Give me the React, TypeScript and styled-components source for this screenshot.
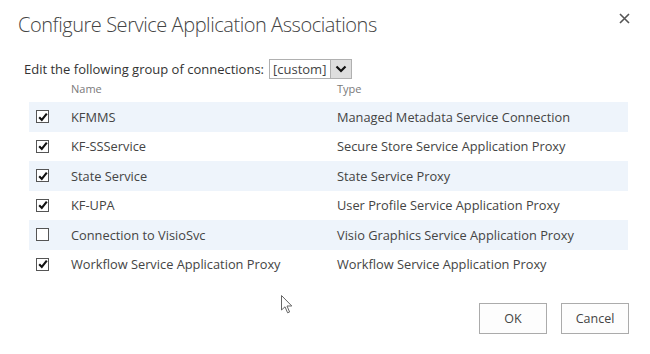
import React from "react";
import styled, { createGlobalStyle } from "styled-components";

const GlobalStyle = createGlobalStyle`
  html, body {
    margin: 0;
    padding: 0;
    background: #ffffff;
  }
  body {
    font-family: "Open Sans", "Liberation Sans", sans-serif;
    color: #444444;
  }
`;

const Dialog = styled.div`
  position: relative;
  width: 650px;
  height: 354px;
  box-sizing: border-box;
  padding: 10px 13px 0 18px;
  display: flex;
  flex-direction: column;
  overflow: hidden;
`;

const Header = styled.div`
  display: flex;
  align-items: flex-start;
  justify-content: space-between;
`;

const Title = styled.h1`
  margin: 0;
  font-weight: 300;
  font-size: 20px;
  line-height: 30px;
  color: #444444;
  letter-spacing: -0.45px;
`;

const CloseButton = styled.button`
  border: none;
  background: transparent;
  padding: 0;
  margin: 1px 6px 0 0;
  width: 14px;
  height: 14px;
  display: flex;
  align-items: center;
  justify-content: center;
  cursor: pointer;
`;

const GroupLine = styled.div`
  display: flex;
  align-items: center;
  gap: 5px;
  margin: 19px 0 0 6px;
  font-size: 13px;
  color: #333333;
`;

const Select = styled.div`
  display: flex;
  align-items: stretch;
  height: 18px;
  border: 1px solid #b0b0b0;
  font-size: 13px;
`;

const SelectValue = styled.span`
  padding: 0 4px 0 3px;
  line-height: 18px;
  color: #444444;
`;

const SelectArrow = styled.span`
  width: 20px;
  background: #dedede;
  border-left: 1px solid #b0b0b0;
  display: flex;
  align-items: center;
  justify-content: center;
`;

const Table = styled.div`
  margin: 2px 0 0 11px;
  width: 599px;
  display: flex;
  flex-direction: column;
`;

const Row = styled.div<{ $band?: boolean; $head?: boolean }>`
  display: grid;
  grid-template-columns: 42px 266px 1fr;
  align-items: ${p => (p.$head ? "start" : "center")};
  height: ${p => (p.$head ? "21px" : "29.5px")};
  background: ${p => (p.$band ? "#eef4fb" : "transparent")};
  font-size: ${p => (p.$head ? "11px" : "12.8px")};
  color: ${p => (p.$head ? "#7a7a7a" : "#444444")};
`;

const CheckCell = styled.div`
  padding-left: 7px;
  display: flex;
  align-items: center;
`;

const Box = styled.span`
  width: 11px;
  height: 11px;
  border: 1px solid #555555;
  background: #ffffff;
  display: flex;
  align-items: center;
  justify-content: center;
`;

const Cell = styled.div`
  white-space: nowrap;
`;

const Footer = styled.div`
  display: flex;
  justify-content: flex-end;
  gap: 14px;
  margin-top: auto;
  margin-bottom: 20px;
  margin-right: 8px;
`;

const Button = styled.button`
  width: 68px;
  height: 31px;
  border: 1px solid #ababab;
  background: #fdfdfd;
  font-family: "Open Sans", "Liberation Sans", sans-serif;
  font-size: 12.5px;
  color: #444444;
  cursor: pointer;
`;

const Pointer = styled.svg`
  position: absolute;
  left: 281px;
  top: 295px;
`;

const rows = [
  { name: "KFMMS", type: "Managed Metadata Service Connection", checked: true },
  { name: "KF-SSService", type: "Secure Store Service Application Proxy", checked: true },
  { name: "State Service", type: "State Service Proxy", checked: true },
  { name: "KF-UPA", type: "User Profile Service Application Proxy", checked: true },
  { name: "Connection to VisioSvc", type: "Visio Graphics Service Application Proxy", checked: false },
  { name: "Workflow Service Application Proxy", type: "Workflow Service Application Proxy", checked: true },
];

function Check({ on }: { on: boolean }) {
  return (
    <Box>
      {on && (
        <svg width="10" height="10" viewBox="0 0 10 10">
          <path d="M1.2 5.2 L3.8 8 L8.8 1.6" fill="none" stroke="#111" strokeWidth="2.1" />
        </svg>
      )}
    </Box>
  );
}

export default function App() {
  return (
    <>
      <GlobalStyle />
      <Dialog>
        <Header>
          <Title>Configure Service Application Associations</Title>
          <CloseButton aria-label="Close">
            <svg width="11" height="11" viewBox="0 0 11 11">
              <path d="M1 1 L10 10 M10 1 L1 10" stroke="#555" strokeWidth="1.6" />
            </svg>
          </CloseButton>
        </Header>
        <GroupLine>
          Edit the following group of connections:
          <Select>
            <SelectValue>[custom]</SelectValue>
            <SelectArrow>
              <svg width="12" height="8" viewBox="0 0 12 8">
                <path d="M1.5 1.5 L6 6 L10.5 1.5" fill="none" stroke="#111" strokeWidth="2.2" />
              </svg>
            </SelectArrow>
          </Select>
        </GroupLine>
        <Table>
          <Row $head>
            <span />
            <Cell>Name</Cell>
            <Cell>Type</Cell>
          </Row>
          {rows.map((r, i) => (
            <Row key={r.name} $band={i % 2 === 0}>
              <CheckCell>
                <Check on={r.checked} />
              </CheckCell>
              <Cell>{r.name}</Cell>
              <Cell>{r.type}</Cell>
            </Row>
          ))}
        </Table>
        <Footer>
          <Button>OK</Button>
          <Button>Cancel</Button>
        </Footer>
        <Pointer width="12" height="19" viewBox="0 0 12 19">
          <path d="M0.5 0.5 L0.5 15 L4 11.8 L6.6 17.8 L8.6 17 L6 11 L10.8 11 Z" fill="#fff" stroke="#666" strokeWidth="1" />
        </Pointer>
      </Dialog>
    </>
  );
}
